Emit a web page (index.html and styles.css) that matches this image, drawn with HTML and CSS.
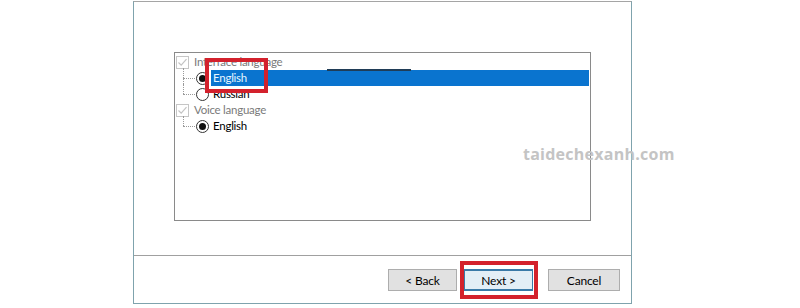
FILE: index.html
```html
<!DOCTYPE html>
<html>
<head>
<meta charset="utf-8">
<link rel="stylesheet" href="styles.css">
</head>
<body>
<div class="window">
  <div class="body">
    <div class="tree">
      <div class="row">
        <span class="check"><svg width="11" height="11" viewBox="0 0 11 11"><path d="M1.5 5.5 L4.2 8.2 L9.5 2.2" fill="none" stroke="#c4c4c4" stroke-width="1.2"/></svg></span>
        <span class="cat">Interface language</span>
      </div>
      <div class="row">
        <span class="branch"></span>
        <span class="radio on"></span>
        <span class="label sel">English</span>
      </div>
      <div class="row">
        <span class="branch last"></span>
        <span class="radio"></span>
        <span class="label">Russian</span>
      </div>
      <div class="row">
        <span class="check"><svg width="11" height="11" viewBox="0 0 11 11"><path d="M1.5 5.5 L4.2 8.2 L9.5 2.2" fill="none" stroke="#c4c4c4" stroke-width="1.2"/></svg></span>
        <span class="cat">Voice language</span>
      </div>
      <div class="row">
        <span class="branch last"></span>
        <span class="radio on"></span>
        <span class="label">English</span>
      </div>
    </div>
  </div>
  <div class="footer">
    <button class="btn">&lt; Back</button>
    <button class="btn focus">Next &gt;</button>
    <button class="btn cancel">Cancel</button>
  </div>
</div>
<div class="artifact"></div>
<div class="mark mark-english"></div>
<div class="mark mark-next"></div>
<div class="watermark">taidechexanh.com</div>
</body>
</html>
```

FILE: styles.css
```css
html, body {
  margin: 0;
  padding: 0;
  background: #fff;
}
body {
  position: relative;
  width: 800px;
  height: 308px;
  overflow: hidden;
  font-family: Lato, "Noto Sans", sans-serif;
  font-size: 11.5px;
  letter-spacing: -0.25px;
  color: #000;
}
.window {
  margin-left: 133px;
  margin-top: 1px;
  width: 497px;
  height: 301px;
  border: 1px solid #7fa3ad;
  border-top-color: #a5a5a5;
  display: flex;
  flex-direction: column;
  background: #fff;
}
.body {
  height: 254px;
  padding: 50px 0 0 40px;
  box-sizing: border-box;
  border-bottom: 1px solid #a0a0a0;
}
.tree {
  width: 415px;
  height: 166px;
  border: 1px solid #8a8a8a;
  padding-top: 1px;
  box-sizing: content-box;
  display: flex;
  flex-direction: column;
}
.row {
  height: 16px;
  display: flex;
  align-items: center;
  line-height: 16px;
  white-space: nowrap;
}
.check {
  width: 11px;
  height: 11px;
  border: 1px solid #c6c6c6;
  margin-left: 1px;
  display: flex;
  align-items: center;
  justify-content: center;
}
.cat {
  margin-left: 5px;
  color: #7a7a7a;
}
.branch {
  position: relative;
  width: 21px;
  height: 16px;
  flex: none;
}
.branch::before {
  content: "";
  position: absolute;
  left: 8px;
  top: -2px;
  height: 18px;
  border-left: 1px dotted #9a9a9a;
}
.branch.last::before {
  height: 10px;
}
.branch::after {
  content: "";
  position: absolute;
  left: 8px;
  top: 8px;
  width: 12px;
  border-top: 1px dotted #9a9a9a;
}
.radio {
  width: 11px;
  height: 11px;
  border: 1px solid #333;
  border-radius: 50%;
  flex: none;
  display: flex;
  align-items: center;
  justify-content: center;
  background: #fff;
}
.radio.on::after {
  content: "";
  width: 7px;
  height: 7px;
  border-radius: 50%;
  background: #111;
}
.label {
  margin-left: 2px;
  padding-left: 2px;
  height: 16px;
}
.label.sel {
  flex: 1;
  margin-right: 1px;
  background: #0a74cf;
  color: #e6f7ff;
}
.footer {
  flex: 1;
  display: flex;
  align-items: flex-start;
  justify-content: flex-end;
  padding: 13px 11px 0 0;
}
.btn {
  width: 69px;
  height: 22px;
  margin: 0;
  padding: 0;
  border: 1px solid #adadad;
  background: #e1e1e1;
  font-family: Lato, "Noto Sans", sans-serif;
  font-size: 12px;
  letter-spacing: -0.2px;
  color: #000;
}
.btn.focus {
  margin-left: 7px;
  border: 1px solid #3a7aa8;
  border-top-width: 2px;
  border-bottom-width: 2px;
  background: #e3eef6;
}
.btn.cancel {
  width: 72px;
  margin-left: 15px;
}
.artifact {
  position: absolute;
  left: 327px;
  top: 69px;
  width: 84px;
  height: 2px;
  background: #203d57;
}
.mark {
  position: absolute;
  border: 4px solid #d3212c;
  box-sizing: border-box;
}
.mark-english {
  left: 205px;
  top: 58px;
  width: 63px;
  height: 35px;
}
.mark-next {
  left: 460px;
  top: 261px;
  width: 78px;
  height: 38px;
}
.watermark {
  position: absolute;
  left: 523px;
  top: 143px;
  font-family: "Open Sans", "Noto Sans", sans-serif;
  font-weight: bold;
  font-size: 16px;
  letter-spacing: 0.25px;
  color: #c4c4c4;
}
```
